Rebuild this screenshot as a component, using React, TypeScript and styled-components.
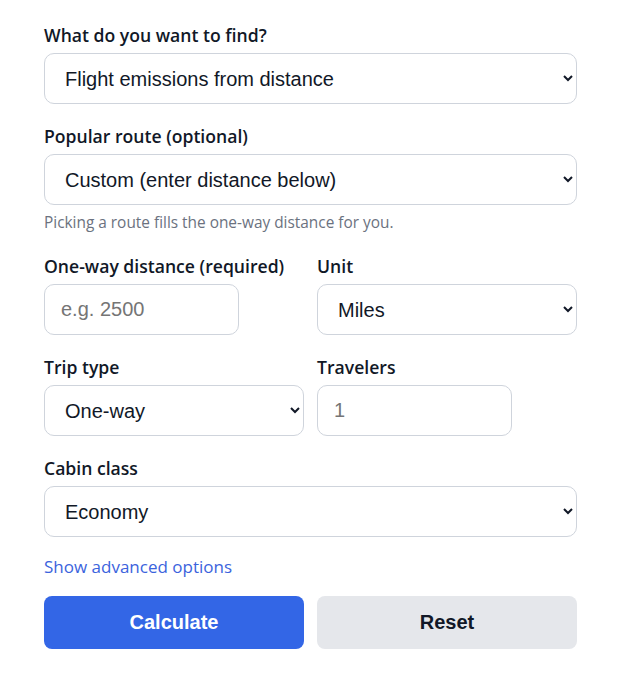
import styled, { createGlobalStyle } from 'styled-components'

const GlobalStyle = createGlobalStyle`
  body {
    margin: 0;
    background: #ffffff;
    font-family: "Open Sans", "Noto Sans", sans-serif;
    color: #111827;
  }
`

const Form = styled.form`
  width: 533px;
  padding: 23px 44px;
  display: flex;
  flex-direction: column;
  gap: 20px;
`

const Field = styled.div`
  display: flex;
  flex-direction: column;
`

const Row = styled.div`
  display: grid;
  grid-template-columns: 1fr 1fr;
  column-gap: 13px;
`

const Label = styled.label`
  font-size: 17.6px;
  font-weight: 600;
  line-height: 24px;
  margin-bottom: 6px;
  color: #111827;
`

const Select = styled.select`
  box-sizing: border-box;
  width: 100%;
  height: 51px;
  padding: 0 10px 0 16px;
  border: 1px solid #cfd4dc;
  border-radius: 10px;
  background: #ffffff;
  font-family: "Liberation Sans", Arial, sans-serif;
  font-size: 20px;
  color: #111827;
`

const Input = styled.input`
  box-sizing: border-box;
  width: 195px;
  height: 51px;
  padding: 0 16px;
  border: 1px solid #cfd4dc;
  border-radius: 10px;
  font-family: "Liberation Sans", Arial, sans-serif;
  font-size: 20px;
  color: #111827;

  &::placeholder {
    color: #757575;
  }
`

const Hint = styled.p`
  margin: 6px 0 0;
  font-size: 15.4px;
  line-height: 23px;
  color: #6b7280;
`

const AdvancedLink = styled.a`
  font-size: 17px;
  font-weight: 500;
  line-height: 20px;
  color: #3b63dd;
  text-decoration: none;
  cursor: pointer;
`

const Actions = styled.div`
  display: grid;
  grid-template-columns: 1fr 1fr;
  column-gap: 13px;
  margin-top: -1px;
`

const Button = styled.button<{ $primary?: boolean }>`
  height: 53px;
  border: none;
  border-radius: 8px;
  font-family: "Liberation Sans", Arial, sans-serif;
  font-size: 20px;
  font-weight: 700;
  cursor: pointer;
  background: ${p => (p.$primary ? '#3366e6' : '#e5e7eb')};
  color: ${p => (p.$primary ? '#ffffff' : '#111827')};
`

export default function App() {
  return (
    <>
      <GlobalStyle />
      <Form onSubmit={e => e.preventDefault()}>
        <Field>
          <Label>What do you want to find?</Label>
          <Select defaultValue="distance">
            <option value="distance">Flight emissions from distance</option>
            <option value="route">Flight emissions from route</option>
          </Select>
        </Field>

        <Field>
          <Label>Popular route (optional)</Label>
          <Select defaultValue="custom">
            <option value="custom">Custom (enter distance below)</option>
            <option value="nyc-lax">New York – Los Angeles</option>
          </Select>
          <Hint>Picking a route fills the one-way distance for you.</Hint>
        </Field>

        <Row>
          <Field>
            <Label>One-way distance (required)</Label>
            <Input type="number" placeholder="e.g. 2500" />
          </Field>
          <Field>
            <Label>Unit</Label>
            <Select defaultValue="miles">
              <option value="miles">Miles</option>
              <option value="km">Kilometers</option>
            </Select>
          </Field>
        </Row>

        <Row>
          <Field>
            <Label>Trip type</Label>
            <Select defaultValue="one">
              <option value="one">One-way</option>
              <option value="round">Round trip</option>
            </Select>
          </Field>
          <Field>
            <Label>Travelers</Label>
            <Input type="number" placeholder="1" />
          </Field>
        </Row>

        <Field>
          <Label>Cabin class</Label>
          <Select defaultValue="economy">
            <option value="economy">Economy</option>
            <option value="premium">Premium economy</option>
            <option value="business">Business</option>
            <option value="first">First</option>
          </Select>
        </Field>

        <AdvancedLink>Show advanced options</AdvancedLink>

        <Actions>
          <Button type="submit" $primary>Calculate</Button>
          <Button type="button">Reset</Button>
        </Actions>
      </Form>
    </>
  )
}
